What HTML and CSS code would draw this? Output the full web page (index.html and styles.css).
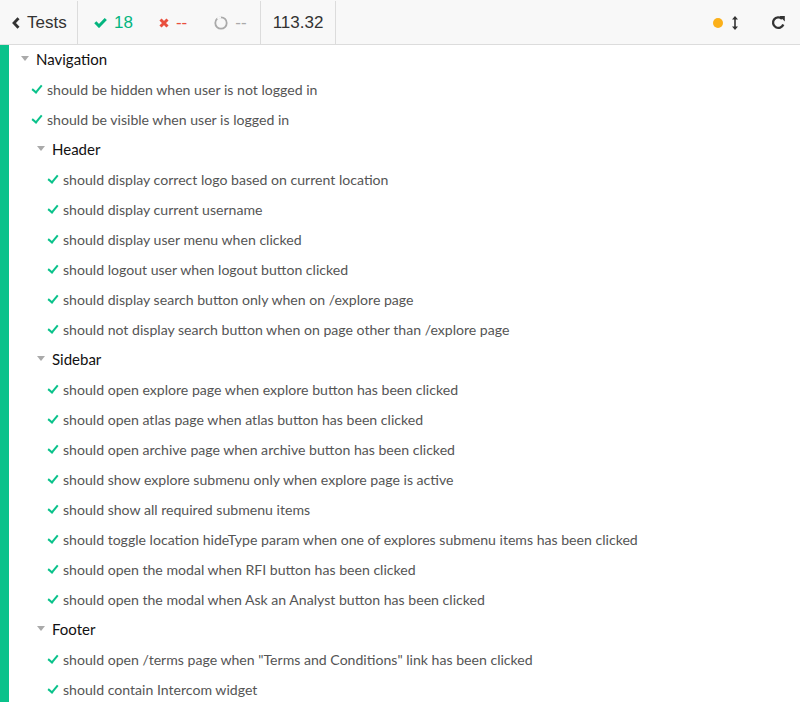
FILE: index.html
```html
<!DOCTYPE html>
<html>
<head>
<meta charset="utf-8">
<link rel="stylesheet" href="styles.css">
</head>
<body>
<header class="bar">
  <div class="seg seg-tests">
    <svg class="chev" width="8" height="12" viewBox="0 0 8 12"><path d="M6.5 1.2 L2 6 L6.5 10.8" fill="none" stroke="#333" stroke-width="2.8"/></svg>
    <span>Tests</span>
  </div>
  <div class="seg seg-stats">
    <span class="stat pass">
      <svg width="13" height="11" viewBox="0 0 13 11"><path d="M1.3 5.3 L5 9 L11.8 2" fill="none" stroke="#04b57f" stroke-width="3"/></svg>
      <span>18</span>
    </span>
    <span class="stat fail">
      <svg width="10" height="10" viewBox="0 0 10 10"><path d="M1.5 1.5 L8.5 8.5 M8.5 1.5 L1.5 8.5" stroke="#e94f3d" stroke-width="3"/></svg>
      <span>--</span>
    </span>
    <span class="stat pend">
      <svg width="14" height="14" viewBox="0 0 14 14"><circle cx="7" cy="7" r="5.7" fill="none" stroke="#aaa" stroke-width="1.8"/><path d="M7 1.3 A5.7 5.7 0 0 0 3.3 2.6" fill="none" stroke="#f8f8f8" stroke-width="2.2"/></svg>
      <span>--</span>
    </span>
  </div>
  <div class="seg seg-dur">113.32</div>
  <div class="spacer"></div>
  <div class="tools">
    <span class="dot"></span>
    <svg class="updown" width="8" height="16" viewBox="0 0 8 16"><path d="M4 2 V14" stroke="#333" stroke-width="1.6"/><path d="M1 4.5 L4 1 L7 4.5 Z M1 11.5 L4 15 L7 11.5 Z" fill="#333"/></svg>
    <svg class="reload" width="15" height="15" viewBox="0 0 15 15"><path d="M12.3 9.5 A5.3 5.3 0 1 1 11 3.8" fill="none" stroke="#333" stroke-width="2.3"/><path d="M8.3 1 L13.8 1 L13.8 6.5 Z" fill="#333"/></svg>
  </div>
</header>
<main class="runner">
  <div class="status"></div>
  <ul class="list">
    <li class="suite l0"><span class="tri"></span>Navigation</li>
    <li class="test l0"><span class="ok"></span>should be hidden when user is not logged in</li>
    <li class="test l0"><span class="ok"></span>should be visible when user is logged in</li>
    <li class="suite l1"><span class="tri"></span>Header</li>
    <li class="test l1"><span class="ok"></span>should display correct logo based on current location</li>
    <li class="test l1"><span class="ok"></span>should display current username</li>
    <li class="test l1"><span class="ok"></span>should display user menu when clicked</li>
    <li class="test l1"><span class="ok"></span>should logout user when logout button clicked</li>
    <li class="test l1"><span class="ok"></span>should display search button only when on /explore page</li>
    <li class="test l1"><span class="ok"></span>should not display search button when on page other than /explore page</li>
    <li class="suite l1"><span class="tri"></span>Sidebar</li>
    <li class="test l1"><span class="ok"></span>should open explore page when explore button has been clicked</li>
    <li class="test l1"><span class="ok"></span>should open atlas page when atlas button has been clicked</li>
    <li class="test l1"><span class="ok"></span>should open archive page when archive button has been clicked</li>
    <li class="test l1"><span class="ok"></span>should show explore submenu only when explore page is active</li>
    <li class="test l1"><span class="ok"></span>should show all required submenu items</li>
    <li class="test l1"><span class="ok"></span>should toggle location hideType param when one of explores submenu items has been clicked</li>
    <li class="test l1"><span class="ok"></span>should open the modal when RFI button has been clicked</li>
    <li class="test l1"><span class="ok"></span>should open the modal when Ask an Analyst button has been clicked</li>
    <li class="suite l1"><span class="tri"></span>Footer</li>
    <li class="test l1"><span class="ok"></span>should open /terms page when "Terms and Conditions" link has been clicked</li>
    <li class="test l1"><span class="ok"></span>should contain Intercom widget</li>
  </ul>
</main>
</body>
</html>
```
FILE: styles.css
```css
html, body {
  margin: 0;
  padding: 0;
  background: #fff;
  height: 100%;
  overflow: hidden;
}
body {
  display: flex;
  flex-direction: column;
}
.bar {
  height: 45px;
  box-sizing: border-box;
  padding-top: 1px;
  flex: none;
  display: flex;
  align-items: stretch;
  background: #f8f8f8;
  border-bottom: 1px solid #dcdcdc;
  font-family: "Liberation Sans", Arial, sans-serif;
  font-size: 17px;
  color: #333;
}
.seg {
  display: flex;
  align-items: center;
  border-right: 1px solid #dcdcdc;
}
.seg-tests {
  width: 78px;
  padding-left: 12px;
  box-sizing: border-box;
  gap: 7px;
}
.seg-stats {
  width: 183px;
  box-sizing: border-box;
  padding-left: 16px;
  gap: 26px;
}
.stat {
  display: flex;
  align-items: center;
  gap: 7px;
}
.pass { color: #04b57f; }
.fail { color: #e94f3d; }
.pend { color: #aaa; }
.pend svg { margin-left: 1px; }
.seg-dur {
  width: 74px;
  justify-content: center;
}
.spacer { flex: 1; }
.tools {
  display: flex;
  align-items: center;
  padding-right: 14px;
}
.dot {
  width: 10px;
  height: 10px;
  border-radius: 50%;
  background: #fbb01a;
  margin-right: 8px;
}
.updown { margin-right: 32px; }
.runner {
  flex: 1;
  display: flex;
}
.status {
  width: 9px;
  flex: none;
  background: #0ac28b;
}
.list {
  list-style: none;
  margin: 0;
  padding: 0;
  font-family: Lato, "Open Sans", sans-serif;
}
.list li {
  height: 30px;
  box-sizing: border-box;
  display: flex;
  align-items: center;
  white-space: nowrap;
}
.suite {
  font-size: 15px;
  color: #111;
  padding-bottom: 3px;
}
.test {
  font-size: 14.1px;
  color: #555;
  padding-bottom: 1px;
}
.suite.l0 { padding-left: 12px; }
.suite.l1 { padding-left: 28px; }
.test.l0 { padding-left: 22px; }
.test.l1 { padding-left: 38px; }
.tri {
  width: 0;
  height: 0;
  border-left: 4.5px solid transparent;
  border-right: 4.5px solid transparent;
  border-top: 5px solid #aaa;
  margin-right: 7px;
}
.ok {
  width: 11px;
  height: 9px;
  margin-right: 5px;
  position: relative;
}
.ok::before {
  content: "";
  position: absolute;
  left: 3px;
  top: -2px;
  width: 4px;
  height: 8px;
  border-right: 2.7px solid #0ac28b;
  border-bottom: 2.7px solid #0ac28b;
  transform: rotate(40deg);
}
```
